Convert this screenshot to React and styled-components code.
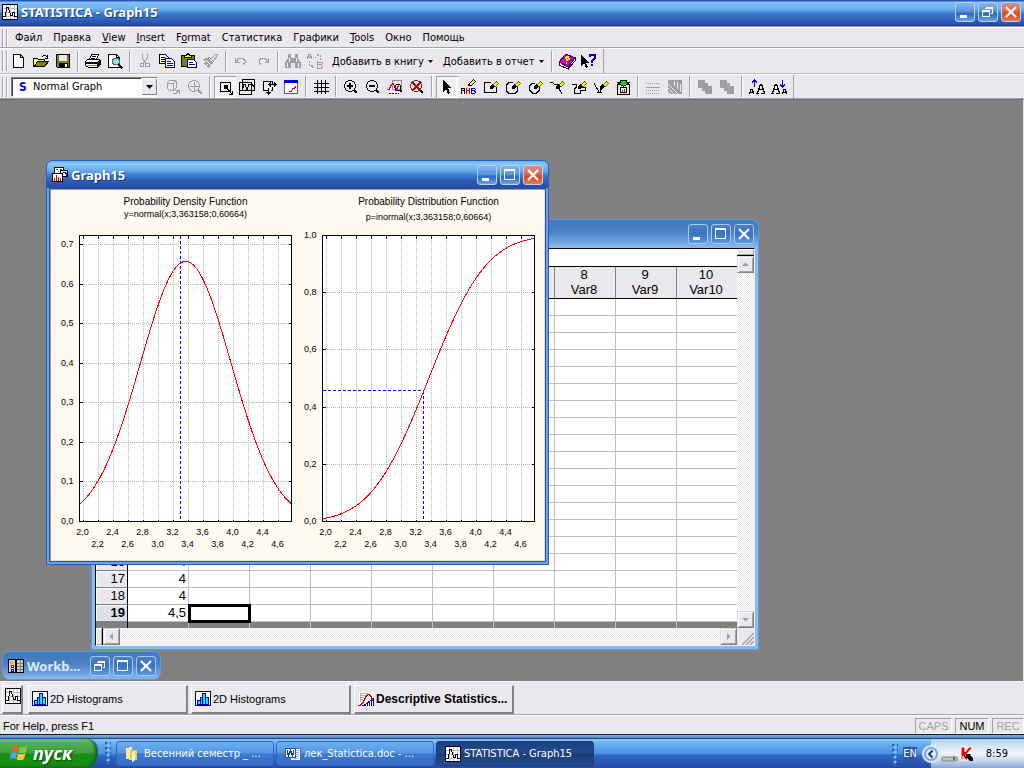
import { useState } from "react";
import styled, { createGlobalStyle, css } from "styled-components";

const GlobalStyle = createGlobalStyle`
	* {
		box-sizing: border-box;
	}
	body {
		margin: 0;
		background: #808080;
		font-family: "DejaVu Sans Condensed", "Noto Sans", sans-serif;
		font-size: 11px;
		color: #000;
	}
	button, select {
		margin: 0;
		padding: 0;
		border: 0;
		background: none;
		font: inherit;
		color: inherit;
	}
`

const face = "#ebe8ed";
const mesh = css`
	background: repeating-conic-gradient(#fff 0 25%, #e6e3e9 0 50%) 0 0 / 2px 2px;
`

const Screen = styled.div`
	display: flex;
	flex-direction: column;
	min-height: 100vh;
`

const AppTitle = styled.header`
	display: flex;
	align-items: center;
	height: 27px;
	padding: 0 3px 2px 2px;
	border-bottom: 1px solid #9a98a0;
	background: linear-gradient(#2a56b8 0, #2a56b8 1px, #84c2f2 2px, #6cb0ee 9px, #4c8fde 12px, #3a78cc 14px, #2f62b8 20px, #2a4ea8 24px, #203f90 26px);
`

const TitleText = styled.h1`
	flex: 1;
	margin: 0 0 0 3px;
	font-family: "Noto Sans", sans-serif;
	font-size: 13px;
	font-weight: bold;
	line-height: 18px;
	color: #fff;
	text-shadow: 1px 1px 0 #1c3a80;
	white-space: nowrap;
`

const TitleButtons = styled.div`
	display: flex;
	gap: 3px;
`

const TitleButton = styled.button`
	display: flex;
	width: 20px;
	height: 20px;
	border: 1px solid ${(p) => p.$idle ? "#a4ccf4" : "#b4d4f6"};
	border-radius: 3px;
	background: ${(p) => p.$close
		? "linear-gradient(#dc9088, #d86850 45%, #e04818 60%, #e87858)"
		: p.$idle
			? "linear-gradient(#4a80c8, #3a72c4 50%, #5c98dc)"
			: "linear-gradient(#88b4ec, #5c94dc 45%, #2c68c0 60%, #6ca4e4)"};
	svg {
		width: 18px;
		height: 18px;
	}
`

const MenuBar = styled.nav`
	display: flex;
	align-items: center;
	height: 21px;
	padding-left: 2px;
	background: ${face};
	border-top: 1px solid #fff;
	border-bottom: 1px solid #a4a1a8;
`

const MenuItem = styled.button`
	padding: 0 5px 0 6px;
	line-height: 16px;
	white-space: nowrap;
`

const Grip = styled.span`
	width: 5px;
	height: ${(p) => p.$height || 20}px;
	margin-right: ${(p) => (p.$height ? 2 : 1)}px;
	border: 1px solid #a4a1a8;
	border-width: 0 1px;
	box-shadow: inset 1px 0 #fff, 1px 0 #fff;
`

const ToolRow = styled.div`
	display: flex;
	height: ${(p) => p.$height}px;
	background: ${face};
	border-top: 1px solid #fff;
	border-bottom: 1px solid ${(p) => (p.$last ? "#a4a1a8" : "#bdbac0")};
`

const Toolbar = styled.div`
	display: flex;
	align-items: center;
	padding: 0 3px 0 2px;
	border-right: 1px solid #a4a1a8;
`

const ToolButton = styled.button`
	display: flex;
	align-items: center;
	justify-content: center;
	width: 22px;
	height: 22px;
	${(p) => p.$on && css`
		${mesh}
		box-shadow: inset 1px 1px #a4a1a8, inset -1px -1px #fff;
	`}
	svg {
		width: 16px;
		height: 16px;
		overflow: visible;
	}
`

const TextButton = styled.button`
	display: flex;
	align-items: center;
	justify-content: space-between;
	min-width: 111px;
	height: 22px;
	padding: 0 4px 0 6px;
	white-space: nowrap;
	svg {
		width: 5px;
		height: 3px;
	}
`

const Divider = styled.span`
	width: 8px;
	height: 21px;
	background: linear-gradient(90deg, transparent 3px, #a4a1a8 3px, #a4a1a8 4px, #fff 4px, #fff 5px, transparent 5px);
`

const Combo = styled.label`
	display: flex;
	align-items: center;
	width: 147px;
	height: 20px;
	margin: 0 4px 0 3px;
	padding-left: 7px;
	border: 1px solid #808080;
	border-right-color: #fff;
	border-bottom-color: #fff;
	box-shadow: inset 1px 1px #404040;
	background: #fff;
	b {
		width: 14px;
		font: bold 12px "DejaVu Sans Condensed", sans-serif;
		color: #0000e8;
	}
	select {
		flex: 1;
		appearance: none;
		outline: none;
	}
`

const ComboArrow = styled.span`
	display: flex;
	align-items: center;
	justify-content: center;
	width: 16px;
	height: 17px;
	background: ${face};
	box-shadow: inset 1px 1px #fff, inset -1px -1px #808080;
	svg {
		width: 7px;
		height: 4px;
	}
`

const Workspace = styled.main`
	position: relative;
	flex: 1;
	min-height: 583px;
	overflow: hidden;
	background: #808080;
	border-top: 1px solid #707078;
	border-right: 1px solid #e4e2e8;
	border-bottom: 1px solid #f4f2f6;
`

const Window = styled.section`
	position: absolute;
	left: ${(p) => p.$x}px;
	top: ${(p) => p.$y}px;
	width: ${(p) => p.$w}px;
	height: ${(p) => p.$h}px;
	display: flex;
	flex-direction: column;
	overflow: hidden;
	border: 1px solid ${(p) => (p.$active ? "#2c5cc0" : "#5c9ae6")};
	border-radius: ${(p) => (p.$docked ? "7px" : "7px 7px 0 0")};
	background: ${(p) => (p.$active ? "#68a2e8" : "#84bcf2")};
`

const WindowTitle = styled.header`
	display: flex;
	flex: none;
	align-items: center;
	height: 27px;
	padding: 1px ${(p) => (p.$active ? 5 : 4)}px 0 5px;
	background: ${(p) => (p.$active
		? "linear-gradient(#6cb0ea, #8ac8f4 3px, #66a8ea 10px, #3c7ed0 14px, #2c5cb4 20px, #264ca4)"
		: "linear-gradient(#4478bc, #4c80c4 12px, #6c9cd8 20px, #88b8ec)")};
	${TitleText} {
		color: ${(p) => (p.$active ? "#fff" : "#dcecff")};
		text-shadow: ${(p) => (p.$active ? "1px 1px 0 #1c3a80" : "none")};
	}
`

const GraphBody = styled.div`
	flex: 1;
	margin: 0 2px 2px;
	border: 1px solid #2a4fa6;
	background: #fffaf0;
	box-shadow: inset 1px 1px #a09ca4, inset -1px -1px #e0dcdc;
	svg {
		display: block;
		width: 100%;
		height: 100%;
	}
`

const SheetBody = styled.div`
	flex: 1;
	display: grid;
	grid-template-columns: 1fr 17px;
	grid-template-rows: 1fr 17px;
	margin: 1px 3px 3px;
	border: 1px solid #000;
	border-right-color: #f4f2f6;
	border-bottom-color: #f4f2f6;
	background: ${face};
	overflow: hidden;
`

const SheetPane = styled.div`
	min-width: 0;
	overflow: hidden;
	background: #808080;
`

const SheetHeading = styled.div`
	height: 18px;
	border-bottom: 1px solid #000;
	background: #fff;
`

const Sheet = styled.table`
	width: 100%;
	table-layout: fixed;
	border-spacing: 0;
	font: 13px "Liberation Sans", Arial, sans-serif;
	th, td {
		padding: 0;
		border-right: 1px solid #c0c0c0;
		border-bottom: 1px solid #c0c0c0;
		overflow: hidden;
	}
	thead th {
		width: 61px;
		height: 32px;
		padding: 0 2px 1px 0;
		background: ${face};
		border-right-color: #808080;
		border-bottom-color: #000;
		font-weight: normal;
		line-height: 15px;
	}
	thead th:first-child {
		width: 32px;
	}
	thead th:last-child {
		width: auto;
	}
	tbody th {
		height: 17px;
		padding-right: 2px;
		background: ${face};
		border-right-color: #000;
		border-bottom-color: #808080;
		box-shadow: inset 1px 1px #fff;
		font-weight: normal;
		line-height: 16px;
		text-align: right;
	}
	tbody td {
		height: 17px;
		padding-right: 2px;
		background: #fff;
		line-height: 16px;
		text-align: right;
	}
	tbody tr:last-child th {
		font-weight: bold;
		background: #dce0e6;
	}
	th:last-child, td:last-child {
		border-right: 0;
	}
	tfoot td {
		height: 6px;
		border-bottom: 0;
	}
	tfoot td:first-child {
		border-right-color: #000;
	}
	td.cursor {
		outline: 3px solid #000;
		outline-offset: -2px;
	}
`

const ScrollBar = styled.div`
	display: flex;
	flex-direction: ${(p) => (p.$vertical ? "column" : "row")};
	${mesh}
`

const ScrollButton = styled.button`
	display: flex;
	align-items: center;
	justify-content: center;
	width: 17px;
	height: 17px;
	background: ${face};
	border: 1px solid #808080;
	border-top-color: #dcd9e0;
	border-left-color: #dcd9e0;
	box-shadow: inset 1px 1px #fff, inset -1px -1px #a4a1a8;
	svg {
		width: 7px;
		height: 7px;
	}
`

const Splitter = styled.span`
	background: ${face};
	box-shadow: inset 1px 1px #fff, inset -1px -1px #a4a1a8;
	${(p) => p.$vertical
		? "height: 7px; border-bottom: 1px solid #000;"
		: "width: 7px; border-right: 1px solid #000;"}
`

const Track = styled.span`
	flex: 1;
`

const WindowBar = styled.div`
	display: flex;
	gap: 3px;
	height: 33px;
	padding: 3px 2px 1px;
	background: ${face};
	border-bottom: 1px solid #a4a1a8;
`

const WindowTab = styled.button`
	display: flex;
	align-items: center;
	gap: 2px;
	flex: 0 1 ${(p) => (p.$square ? 21 : 160)}px;
	min-width: 21px;
	height: 29px;
	padding-left: ${(p) => (p.$square ? 2 : 3)}px;
	padding-bottom: ${(p) => (p.$square ? 6 : 0)}px;
	margin-right: ${(p) => (p.$square ? 2 : 0)}px;
	border: 1px solid #fff;
	border-right: 2px solid #848188;
	border-bottom: 2px solid #848188;
	font-family: "Liberation Sans", Arial, sans-serif;
	font-weight: ${(p) => (p.$active ? "bold" : "normal")};
	font-size: ${(p) => (p.$active ? 12 : 11)}px;
	line-height: 16px;
	white-space: nowrap;
	svg {
		flex: none;
		width: 16px;
		height: 16px;
	}
`

const StatusBar = styled.footer`
	display: flex;
	align-items: center;
	gap: 3px;
	height: 19px;
	padding: 2px 0 0 3px;
	background: ${face};
	border-top: 1px solid #fff;
	font-family: "Liberation Sans", Arial, sans-serif;
	font-size: 11px;
	p {
		flex: 1;
		margin: 0;
	}
`

const StatusCell = styled.span`
	width: ${(p) => p.$w}px;
	height: 16px;
	line-height: 15px;
	text-align: center;
	border: 1px solid #a4a1a8;
	border-right-color: #fff;
	border-bottom-color: #fff;
	color: ${(p) => (p.$on ? "#000" : "#a4a1a8")};
`

const TaskBar = styled.div`
	display: flex;
	height: 34px;
	padding-top: 5px;
	background: linear-gradient(#0c2030 1px, #84acd4 1px, #5c88bc 4px, #1c48a4 4px, #1c48a4 5px, #88c4f2 5px, #5ea8ee 12px, #4a90e0 20px, #2f6cc8 21px, #2c58b4 28px, #2648a4 34px);
	color: #fff;
`

const StartButton = styled.button`
	display: flex;
	align-items: center;
	gap: 4px;
	width: 97px;
	height: 29px;
	padding: 0 0 2px 10px;
	border-radius: 0 10px 12px 0;
	background: linear-gradient(#7cc878, #50b050 4px, #3ca03c 14px, #1c8c1c 15px, #10940c 24px, #2c7c2c);
	box-shadow: inset -2px -1px 3px #186018, 1px 0 #2a58a8;
	font: italic bold 18px "Open Sans", "Noto Sans", sans-serif;
	line-height: 26px;
	text-shadow: 1px 1px 2px #104010;
	svg {
		width: 19px;
		height: 18px;
	}
`

const Dots = styled.span`
	width: 6px;
	height: 22px;
	margin: 3px 5px 0 8px;
	background: radial-gradient(circle at 1px 1px, #2a5cc0 1px, transparent 2px) 0 0 / 5px 5px, radial-gradient(circle at 3px 3px, #8cc4f8 1px, transparent 2px) 0 0 / 5px 5px;
`

const TaskButton = styled.button`
	display: flex;
	align-items: center;
	gap: 3px;
	flex: 0 1 158px;
	height: 25px;
	margin: 2px 2px 0 0;
	padding-left: 8px;
	border-radius: 3px;
	border: 1px solid ${(p) => (p.$active ? "#183c7c" : "#3468bc")};
	background: ${(p) => (p.$active
		? "linear-gradient(#1c4080, #204c94 10px, #1c3c78 12px, #284c90)"
		: "linear-gradient(#6cb0f0, #5496e4 11px, #3c78d0 12px, #386cc4)")};
	font-size: 11px;
	white-space: nowrap;
	svg {
		flex: none;
		width: 16px;
		height: 16px;
	}
`

const Tray = styled.div`
	display: flex;
	align-items: center;
	margin-left: auto;
	height: 29px;
	svg {
		flex: none;
	}
`

const Lang = styled.button`
	width: 14px;
	height: 14px;
	margin-right: 14px;
	line-height: 14px;
	background: #2c58a8;
	font-size: 11px;
`

const TrayLight = styled.div`
	display: flex;
	align-items: center;
	height: 29px;
	width: 93px;
	padding-right: 16px;
	background: linear-gradient(#a8d0f4, #d8e8f8 8px, #f0f6fc 15px, #c4d4ec 22px, #88a4d4);
	color: #000;
	time {
		margin-left: auto;
	}
	svg:first-child {
		margin-left: -10px;
	}
`

// ---- icons ----

const gray = "#a09da4";

const glyphs = {
	create: <path d="M2.5 1.5h7l3 3v10h-10zM9.5 1.5v3h3" fill="#fff" stroke="#000" />,
	open: <>
		<path d="M.5 13.5v-8h4l1 1h6v3h-7z" fill="#ffff60" stroke="#000" />
		<path d="M1.5 13.5l3-5h11l-4 5z" fill="#808000" stroke="#000" />
		<path d="M9 3.5h1M10 2.5h3M13 3.5h1M14.5 2v4M12 5.5h3" fill="none" stroke="#000" />
	</>,
	save: <>
		<path d="M1.5 1.5h13v13h-12l-1-1z" fill="#808000" stroke="#000" />
		<path d="M4 2h8v6H4z" fill={face} />
		<path d="M4 10h9v4H4z" />
		<path d="M10 11h2v3h-2z" fill="#fff" />
	</>,
	print: <>
		<path d="M4.5 6.5l2-5h7l-2 5M7 3.5h4M6 5.5h4" fill="#fff" stroke="#000" />
		<path d="M.5 8.5l2-2h12l1 1v4l-3 3h-9l-3-2z" fill="#fff" stroke="#000" />
		<path d="M1 9h12v2H1zM12 9l3-2v4l-3 3z" />
		<path d="M2 12.5h10" stroke="#808080" />
		<path d="M8 11.5h2" stroke="#ffff00" />
	</>,
	preview: <>
		<path d="M1.5 1.5h8l3 3v10h-11zM9.5 1.5v3h3" fill="#fff" stroke="#000" />
		<circle cx="9" cy="8.5" r="3.5" fill="#80e8f0" stroke="#606060" />
		<path d="M11.5 11.5l4 4" stroke="#000" strokeWidth="2" />
	</>,
	cut: <g fill="none" stroke={gray}>
		<path d="M5.5 1v4l3 5M10.5 1v4l-4 5" />
		<circle cx="5" cy="12" r="2" />
		<circle cx="10.5" cy="12" r="2" />
	</g>,
	copy: <>
		<path d="M.5 1.5h6l3 3v6h-9z" fill="#fff" stroke="#000" />
		<path d="M2 4.5h4M2 6.5h5M2 8.5h4" stroke="#000" />
		<path d="M6.500 5.500h6l3 3v6h-9z" fill="#fff" stroke="#000090" />
		<path d="M8 8.500h4M8 10.500h6M8 12.500h6" stroke="#000090" />
	</>,
	paste: <>
		<path d="M.5 2.500h13v11h-13z" fill="#808000" stroke="#000" />
		<path d="M3.500 4.500v-2h2l1-2h1l1 2h2v2z" fill="#ffff40" stroke="#000" />
		<path d="M6.500 6.500h6l3 3v5h-9z" fill="#fff" stroke="#000090" />
		<path d="M8 9.500h4M8 11.500h6" stroke="#000090" />
	</>,
	brush: <>
		<path d="M0 6l6-2 5 5-6 6-2-2 2-2-3 1-1-2 2-2-2 0z" fill={gray} />
		<path d="M8 6l5-5 2 1-5 6z" fill={face} stroke={gray} />
		<path d="M3 7l6 6M6 5l5 5" stroke="#fff" />
	</>,
	undo: <path d="M2.500 5v4h4M3 8.500l3-3h4l2 2v2l-2 2" fill="none" stroke={gray} />,
	redo: <path d="M13.500 5v4h-4M13 8.500l-3-3h-4l-2 2v2l2 2" fill="none" stroke={gray} />,
	find: <>
		<path d="M3 1h3v4h4V1h3v4l3 5v5h-6v-5H6v5H0v-5l3-5z" fill={gray} />
		<path d="M4.500 5v4M11.500 5v4M2.500 10v4M13.500 10v4" stroke="#fff" />
	</>,
	replace: <>
		<path d="M0 6l2-5h1l2 5M1 4.500h3M10.500 8v7h4l1-1-1-2 1-2-1-1h-4M11 11.500h3" fill="none" stroke={gray} />
		<path d="M8 5l5-4M10 1.500h3v3M13.500 5v2M2.500 8v4l4 2M5 12l2 2-2 1" fill="none" stroke={gray} strokeDasharray="2 1" />
	</>,
	book: <>
		<path d="M0 9l7-8 9 4-7 9z" fill="#c000b0" stroke="#400040" />
		<path d="M0 9v3l9 4v-2zM9 14l7-9v3l-7 8z" fill="#fff" stroke="#400040" />
		<path d="M6 5l3-1 1 2-2 1v1M7 10h1" stroke="#ffff00" strokeWidth="2" fill="none" />
	</>,
	whatsThis: <>
		<path d="M0 2v11l3-3 2 5 2-1-2-4h3z" />
		<path d="M9 4V2h5v3l-3 3v2M11 11v2" fill="none" stroke="#0000c0" strokeWidth="2" />
	</>,
	rotate: <>
		<path d="M2.500 3.500l2-2h6l1 1v6l-2 3h-5l-2-2zM3 4.500h5v6M8 4.500l3-2" fill="none" stroke={gray} />
		<path d="M8 14.500h3l3-3M11 11.500h3v3" fill="none" stroke={gray} />
	</>,
	aim: <>
		<circle cx="7" cy="7" r="5.500" fill="none" stroke={gray} />
		<path d="M7.500 3v9M3 7.500h9" stroke={gray} />
		<path d="M11 11l4 4" stroke={gray} strokeWidth="2" />
	</>,
	track: <>
		<path d="M3.500 3.500h10v9h-10z" fill="none" stroke="#000" />
		<path d="M7 6h4v4H7z" />
		<path d="M9 8l6 7M15.500 12v3.500H12" fill="none" stroke="#000" />
	</>,
	brushing: <>
		<path d="M3.500.500h12v11h-12zM.500 3.500h12v12H.500z" fill="none" stroke="#000" />
		<path d="M1 11.500h2l2-6h1l2 5 2-5h3l2 2" fill="none" stroke="#000" />
	</>,
	resize: <>
		<path d="M8 2.500H2.500v9h4M11.500 8v3.500h-2M8 2.500h3.500v2" fill="none" stroke="#000" />
		<path d="M8 5.500h7M10 3.500l-2 2 2 2M13 3.500l2 2-2 2M7.500 9v6M5.500 13l2 2 2-2" fill="none" stroke="#000" />
	</>,
	editor: <>
		<path d="M1.500 1.500h13v13h-13z" fill="#fff" stroke="#606060" />
		<path d="M1 1h14v3H1z" fill="#0000f0" />
		<path d="M6 12.500h2l2-3h1l2-2" fill="none" stroke="#f00000" />
	</>,
	grid: <path d="M4.500 1v14M8.500 1v14M12.500 1v14M1 4.500h15M1 8.500h15M1 12.500h15" stroke="#000" />,
	zoomIn: <>
		<circle cx="7" cy="7" r="5.500" fill="none" stroke="#000" />
		<path d="M4 7h6M7 4v6M11 11l3 3" stroke="#000" strokeWidth="2" />
	</>,
	zoomOut: <>
		<circle cx="7" cy="7" r="5.500" fill="none" stroke="#000" />
		<path d="M4 7h6M11 11l3 3" stroke="#000" strokeWidth="2" />
	</>,
	zoomArea: <>
		<path d="M5.500 1.500h9v9h-9z" fill="none" stroke="#909090" />
		<path d="M0 10.500h2l2-4 2-2 2 3 1 4 3-6" fill="none" stroke="#e00000" />
		<circle cx="11" cy="8.500" r="3" fill="none" stroke="#000" />
		<path d="M13 11l2 2" stroke="#000" strokeWidth="2" />
		<path d="M2 14.500h10" stroke="#0000e0" strokeDasharray="2 1" />
	</>,
	zoomOff: <>
		<circle cx="7" cy="7" r="5.500" fill="none" stroke="#404040" />
		<path d="M11 11l3 3" stroke="#000" strokeWidth="2" />
		<path d="M3 3l9 9M12 3l-9 9" stroke="#c00000" strokeWidth="2" />
	</>,
	pointer: <path d="M4 1v12l3-3 2 5 2-1-2-5h4z" />,
	label: <>
		<path d="M.500 15V9.500h3V15M.500 11.500h3" stroke="#000" fill="none" />
		<path d="M5.500 9v6M8.500 9v6M5 11.500h4" stroke="#e00000" fill="none" />
		<path d="M10.500 9.500h3l1 1-1 1 1 2-1 1h-3zM11 11.500h3" stroke="#0000e0" fill="none" />
		<path d="M7.500 6.500l1-2 4-4 2 2-4 4z" fill="#ffff00" stroke="#000" />
	</>,
	hatch: <>
		<path d="M1 4.500h14M1 11.500h14M1 14.500h14" stroke={gray} strokeDasharray="1 1" />
		<path d="M1 8h14" stroke={gray} strokeWidth="1" />
	</>,
	fill: <>
		<path d="M1 1h14v14H1z" fill={gray} />
		<path d="M1 5l10 10M1 9l6 6M1 13l2 2M7.500 2v5M10.500 3v7M13.500 5v8" stroke={face} />
	</>,
	front: <path d="M1 1h7v3h3v3h4v8H8v-3H5V9H1z" fill={gray} />,
	grow: <>
		<path d="M7 14.500h3M12 14.500h4M8.500 14l3-9h1l3 9M10 10.500h4" fill="none" stroke="#000" />
		<path d="M.500 15l1.500-5h1l2 5M1 13.500h4" fill="none" stroke="#000" />
		<path d="M5.500 8V1M3 3.500L5.500 1 8 3.500" fill="none" stroke="#0000f0" />
	</>,
	shrink: <>
		<path d="M0 14.500h3M5 14.500h4M1.500 14l3-9h1l3 9M3 10.500h4" fill="none" stroke="#000" />
		<path d="M11.500 15l1.500-5h1l2 5M12 13.500h4" fill="none" stroke="#000" />
		<path d="M11.500 1v7M9 5.500L11.500 8 14 5.500" fill="none" stroke="#0000f0" />
	</>,
	embed: <>
		<path d="M2.500 5.500h12v10h-12z" fill={face} stroke="#000" />
		<path d="M5.500 8.500h6v5h-6z" fill="#fff" stroke="#000" />
		<path d="M7.500 11v2M9.500 10v3" stroke="#e00000" />
		<path d="M5.500 1.500h6v2h3l-6 4-6-4h3z" fill="#00e000" stroke="#000" />
	</>,
	stat: <>
		<path d="M.5.500h15v15H.500z" fill="#fff" stroke="#000" />
		<path d="M4.500 1v14M8.500 1v14M12.500 1v14M1 4.500h14M1 8.500h14M1 12.500h14" stroke="#c0c0c0" />
		<path d="M1 12.500h2l2-9h1l3 8h1l1-3h1l1 4h2" fill="none" stroke="#000" />
	</>,
	graphDoc: <>
		<path d="M2.500.500h9v7h-9z" fill="#fff" stroke="#000" />
		<path d="M4 2.500h2M6 4.500h1M8 2.500h2" stroke="#00a000" />
		<path d="M8.500 3.500h7v6h-7z" fill="#fff" stroke="#000" />
		<path d="M11 5.500h2v1h1v2" fill="none" stroke="#0000e0" />
		<path d="M.5 6.500h10v8H.500z" fill="#fff" stroke="#000" />
		<path d="M2.500 11v3M4.500 8v6M6.500 10v4M8.500 11v3" stroke="#e00000" />
	</>,
	workbook: <>
		<path d="M0 1h16v14H0z" />
		<path d="M1 2h6v12H1zM9 2h6v12H9z" fill="#d0d0d0" />
		<path d="M2.500 3.500h2v2h-2z" fill="#fff" stroke="#c0b000" />
		<path d="M3.500 7.500h2v2h-2z" fill="#fff" stroke="#e00000" />
		<path d="M3.500 11.500h2v2h-2z" fill="#fff" stroke="#0000e0" />
		<path d="M12.500 2v12M9 5.500h6M9 8.500h6M9 11.500h6" stroke="#808080" />
	</>,
	histogram: <>
		<path d="M.5.500h15v14H.500z" fill="#fff" stroke="#000080" />
		<path d="M2.500 13.500v-4h3v-3h2v-4h3v4h3v7z" fill="#00e8f8" stroke="#0000b0" />
		<path d="M5.500 9v5M7.500 6v8M10.500 6v8" stroke="#0000b0" />
	</>,
	descriptive: <>
		<path d="M1 1h14v14H1z" fill="#fff" />
		<path d="M2 2.500h8M2 4.500h6M2 6.500h4M2 8.500h3M2.500 2v9" stroke="#b0b0b0" />
		<path d="M3 15l4-2 4-3 5-3v8z" fill="#0000d0" />
		<path d="M8.500 13v2M10.500 12v3M12.500 10v5M14.500 10v5" stroke="#fff" />
		<path d="M0 14.500h2l3-3 3-6 2-2h1l2 2 2 4" fill="none" stroke="#e00000" />
	</>,
	folder: <>
		<path d="M1 2l6-1v13l-6-1z" fill="#f8e8a0" />
		<path d="M5 4h7v10l-5 1-2-2z" fill="#e8c860" />
		<path d="M7 6l3-1v9l-3 2z" fill="#fff4b8" />
	</>,
	word: <>
		<path d="M5 2h10v12H5z" fill="#fff" stroke="#4870c0" />
		<path d="M9 4.500h5M9 6.500h5M9 8.500h5M9 10.500h5M9 12.500h4" stroke="#90a8d8" />
		<path d="M.5 2.500h10v9H.500z" fill="#fff" stroke="#2850b0" />
		<path d="M2 4.500l1.500 5L5.500 5l2 4.500L9 4.500" fill="none" stroke="#1838a0" strokeWidth="1.500" />
	</>,
};

const shapes = {
	rect: "M8 3.500H1.500v10h12V8",
	round: "M8 3.500H4L1.500 6v6l2 2h7l2-2V8",
	ellipse: "M8 4.500H5L2.500 7v4l3 3h4l3-3V8",
	arc: "M1 3.500h2l3 2h2l2 3 1 3 2 3",
	poly: "M1 5.500h4v3l-2 2v4h6v-3h5v-3h-4",
	arrow: "M1 4l5 9h1l2-5M3.500 13.500h5M7.500 10v4",
};

// A drawing tool: its outline with a pencil on the upper right
const Pencil = ({ shape }) => (
	<>
		<path d={shapes[shape]} fill="none" stroke="#000" />
		<path d="M9.500 5.500l4-4 2 2-4 4z" fill="#ffff00" stroke="#000" strokeWidth=".600" />
		<path d="M7 10v-2l2-3 3 3-3 2z" />
	</>
);

const Icon = ({ name }) => (
	<svg viewBox="0 0 16 16" shapeRendering="crispEdges" aria-hidden="true">
		{shapes[name] ? <Pencil shape={name} /> : glyphs[name]}
	</svg>
);

const SmallIcon = styled.span`
	display: flex;
	svg {
		width: 16px;
		height: 16px;
	}
`

const Arrow = ({ dir, color }) => {
	const d = {
		up: "M0 5h7L3.500 1.500z",
		down: "M0 2h7L3.500 5.500z",
		left: "M5 0v7L1.500 3.500z",
		right: "M2 0v7L5.500 3.500z",
	};
	return <svg viewBox="0 0 7 7" aria-hidden="true"><path d={d[dir]} fill={color || gray} /></svg>;
}

const marks = {
	minimize: <path d="M4 12h7v3H4z" fill="#fff" />,
	maximize: <path d="M3.500 3.500h10v10h-10zM4 4.500h10" fill="none" stroke="#fff" shapeRendering="crispEdges" />,
	restore: <path d="M6.500 4.500h7v6h-2M6 5.500h8M3.500 7.500h7v6h-7zM3 8.500h8" fill="none" stroke="#fff" shapeRendering="crispEdges" />,
	close: <path d="M4 4l10 10M14 4L4 14" stroke="#fff" strokeWidth="2.200" />,
};

const Controls = ({ kinds, idle }) => (
	<TitleButtons>
		{kinds.map((kind) => (
			<TitleButton key={kind} aria-label={kind} $idle={idle} $close={kind === "close" && !idle}>
				<svg viewBox="0 0 18 18">{marks[kind]}</svg>
			</TitleButton>
		))}
	</TitleButtons>
);

const Tools = ({ names, on }) => names.map((name, i) => (
	name === "|"
		? <Divider key={i} />
		: <ToolButton key={i} aria-label={name} $on={name === on}><Icon name={name} /></ToolButton>
));

// ---- graph ----

const MEAN = 3.363158;
const SIGMA = 0.60664;
const CUT = 3.3;
const PLOT_W = 212;
const PLOT_H = 286;

const density = (x) => Math.exp(-((x - MEAN) ** 2) / (2 * SIGMA ** 2)) / (SIGMA * Math.sqrt(2 * Math.PI));

const distribution = (x) => {
	const z = Math.abs(x - MEAN) / SIGMA;
	const t = 1 / (1 + 0.2316419 * z);
	const poly = t * (0.31938153 + t * (-0.356563782 + t * (1.781477937 + t * (-1.821255978 + t * 1.330274429))));
	const tail = Math.exp(-z * z / 2) / Math.sqrt(2 * Math.PI) * poly;
	return x > MEAN ? 1 - tail : tail;
}

const toX = (v) => 4 + (v - 2) * 75;
const comma = (v) => v.toFixed(1).replace(".", ",");

const PlotText = styled.text`
	font: ${(p) => p.$size || 9}px "Liberation Sans", Arial, sans-serif;
`

const Plot = ({ x, title, formula, formulaY, fn, max, step, cutFrom, guide }) => {
	const toY = (v) => PLOT_H - (v / max) * PLOT_H;
	const cutX = Math.floor(toX(CUT));
	const xTicks = Array.from({ length: 14 }, (_, i) => 2 + i * 0.2);
	const yTicks = Array.from({ length: Math.floor(max / step + 0.01) + 1 }, (_, i) => i * step);
	const points = Array.from({ length: PLOT_W + 1 }, (_, px) => `${px},${toY(fn(2 + (px - 4) / 75))}`).join(" ");

	return (
		<g transform={`translate(${x} 45.5)`} shapeRendering="crispEdges">
			<rect width={PLOT_W} height={PLOT_H} fill="#fff" />
			{xTicks.map((v) => (
				<g key={v}>
					<path d={`M${Math.round(toX(v))} 0V${PLOT_H}`} stroke="#b4b4b4" strokeDasharray="1 1" />
					<path d={`M${Math.round(toX(v))} 0v3M${Math.round(toX(v))} ${PLOT_H}v-2`} stroke="#000" />
				</g>
			))}
			{yTicks.map((v) => (
				<g key={v}>
					<path d={`M0 ${Math.round(toY(v))}H${PLOT_W}`} stroke="#b4b4b4" strokeDasharray="1 1" />
					<path d={`M0 ${Math.round(toY(v))}h3M${PLOT_W} ${Math.round(toY(v))}h-3`} stroke="#000" />
					<PlotText x="-6" y={Math.round(toY(v)) + 2} textAnchor="end">{comma(v)}</PlotText>
				</g>
			))}
			<path
				d={`M${cutX} ${cutFrom}V${PLOT_H}${guide ? `M0 ${cutFrom}H${cutX}` : ""}`}
				fill="none"
				stroke="#0000ff"
				strokeDasharray="3 2"
			/>
			<polyline points={points} fill="none" stroke="#ff0000" />
			<rect width={PLOT_W} height={PLOT_H} fill="none" stroke="#000" />
			{xTicks.map((v, i) => (
				<PlotText key={v} x={Math.round(toX(v)) - 1} y={i % 2 ? PLOT_H + 25 : PLOT_H + 13} textAnchor="middle">
					{comma(v)}
				</PlotText>
			))}
			<PlotText $size={10} x={PLOT_W / 2} y="-31" textAnchor="middle">{title}</PlotText>
			<PlotText x={PLOT_W / 2} y={formulaY} textAnchor="middle">{formula}</PlotText>
		</g>
	);
}

const GraphWindow = () => (
	<Window $x={46} $y={60} $w={503} $h={405} $active>
		<WindowTitle $active>
			<SmallIcon><Icon name="graphDoc" /></SmallIcon>
			<TitleText as="h2">Graph15</TitleText>
			<Controls kinds={["minimize", "maximize", "close"]} />
		</WindowTitle>
		<GraphBody>
			<svg viewBox="0 0 495 372" preserveAspectRatio="xMinYMin" role="img" aria-label="Normal distribution">
				<g transform="translate(1 1)">
					<Plot
						x={28.5} title="Probability Density Function" formula="y=normal(x;3,363158;0,60664)"
						formulaY={-19} fn={density} max={0.723} step={0.1} cutFrom={0}
					/>
					<Plot
						x={271.5} title="Probability Distribution Function" formula="p=inormal(x;3,363158;0,60664)"
						formulaY={-16} fn={distribution} max={1} step={0.2} cutFrom={155} guide
					/>
				</g>
			</svg>
		</GraphBody>
	</Window>
);

// ---- spreadsheet ----

const columns = [1, 2, 3, 4, 5, 6, 7, 8, 9, 10];
const values = { 16: "4", 17: "4", 18: "4", 19: "4,5" };

const SheetWindow = () => (
	<Window $x={91} $y={119} $w={668} $h={431}>
		<WindowTitle>
			<TitleText as="h2" />
			<Controls kinds={["minimize", "maximize", "close"]} idle />
		</WindowTitle>
		<SheetBody>
			<SheetPane>
				<SheetHeading />
				<Sheet>
					<thead>
						<tr>
							<th />
							{columns.map((c) => <th key={c} scope="col">{c}<br />Var{c}</th>)}
						</tr>
					</thead>
					<tbody>
						{Array.from({ length: 19 }, (_, i) => i + 1).map((row) => (
							<tr key={row}>
								<th scope="row">{row}</th>
								{columns.map((c) => (
									<td key={c} className={row === 19 && c === 2 ? "cursor" : undefined}>
										{c === 1 && values[row]}
									</td>
								))}
							</tr>
						))}
					</tbody>
					<tfoot>
						<tr>
							<td />
							{columns.map((c) => <td key={c} />)}
						</tr>
					</tfoot>
				</Sheet>
			</SheetPane>
			<ScrollBar $vertical>
				<Splitter $vertical />
				<ScrollButton aria-label="up"><Arrow dir="up" /></ScrollButton>
				<Track />
				<ScrollButton aria-label="down"><Arrow dir="down" /></ScrollButton>
			</ScrollBar>
			<ScrollBar>
				<Splitter />
				<ScrollButton aria-label="left"><Arrow dir="left" /></ScrollButton>
				<Track />
				<ScrollButton aria-label="right"><Arrow dir="right" /></ScrollButton>
			</ScrollBar>
			<svg width="17" height="17" aria-hidden="true">
				<path d="M5 17L17 5M9 17l8-8M13 17l4-4" stroke="#a4a1a8" strokeWidth="1.5" />
			</svg>
		</SheetBody>
	</Window>
);

const menu = ["Файл", "Правка", "_View", "_Insert", "F_ormat", "Статистика", "Графики", "_Tools", "Окно", "Помощь"];

const MenuLabel = ({ text }) => {
	const at = text.indexOf("_");
	if (at < 0)
		return text;
	return <>{text.slice(0, at)}<u>{text[at + 1]}</u>{text.slice(at + 2)}</>;
}

const DropMark = () => <svg viewBox="0 0 7 4" aria-hidden="true"><path d="M0 0h7L3.500 4z" /></svg>;

const App = () => {
	const [graph, setGraph] = useState("Normal Graph");

	return (
		<Screen>
			<GlobalStyle />
			<AppTitle>
				<SmallIcon><Icon name="stat" /></SmallIcon>
				<TitleText>STATISTICA - Graph15</TitleText>
				<Controls kinds={["minimize", "restore", "close"]} />
			</AppTitle>
			<MenuBar>
				<Grip $height={18} />
				{menu.map((item) => <MenuItem key={item}><MenuLabel text={item} /></MenuItem>)}
			</MenuBar>
			<ToolRow $height={26}>
				<Toolbar>
					<Grip />
					<Tools names={["create", "open", "save", "|", "print", "preview", "|", "cut", "copy", "paste", "brush", "|", "undo", "redo", "|", "find", "replace"]} />
					<TextButton>Добавить в книгу<DropMark /></TextButton>
					<TextButton>Добавить в отчет<DropMark /></TextButton>
					<Tools names={["|", "book", "whatsThis"]} />
				</Toolbar>
			</ToolRow>
			<ToolRow $height={25} $last>
				<Toolbar>
					<Grip />
					<Combo>
						<b>S</b>
						<select aria-label="Graph style" value={graph} onChange={(e) => setGraph(e.target.value)}>
							<option>Normal Graph</option>
						</select>
						<ComboArrow><DropMark /></ComboArrow>
					</Combo>
					<Tools on="track" names={["rotate", "aim", "|", "track", "brushing", "resize", "editor", "|", "grid", "|", "zoomIn", "zoomOut", "zoomArea", "zoomOff", "|"]} />
					<Tools on="pointer" names={["pointer", "label", "rect", "round", "ellipse", "arc", "poly", "arrow", "embed", "|", "hatch", "fill", "|", "front", "front", "|", "grow", "shrink"]} />
				</Toolbar>
			</ToolRow>
			<Workspace>
				<SheetWindow />
				<GraphWindow />
				<Window $x={2} $y={551} $w={159} $h={29} $docked>
					<WindowTitle>
						<SmallIcon><Icon name="workbook" /></SmallIcon>
						<TitleText as="h2">Workb...</TitleText>
						<Controls kinds={["restore", "maximize", "close"]} idle />
					</WindowTitle>
				</Window>
			</Workspace>
			<WindowBar>
				<WindowTab $square aria-label="Analysis"><Icon name="stat" /></WindowTab>
				<WindowTab><Icon name="histogram" />2D Histograms</WindowTab>
				<WindowTab><Icon name="histogram" />2D Histograms</WindowTab>
				<WindowTab $active><Icon name="descriptive" />Descriptive Statistics...</WindowTab>
			</WindowBar>
			<StatusBar>
				<p>For Help, press F1</p>
				<StatusCell $w={37}>CAPS</StatusCell>
				<StatusCell $w={34} $on>NUM</StatusCell>
				<StatusCell $w={32}>REC</StatusCell>
			</StatusBar>
			<TaskBar>
				<StartButton>
					<svg viewBox="0 0 19 18" aria-hidden="true">
						<path d="M3 3c2-2 4-2 6-1L7.500 8C5.500 7 3.500 7 1.500 8.500z" fill="#f06030" />
						<path d="M10 2.500c2 1 5 1 7.500-.500L16 8c-2 1.500-5 1.500-7.500.500z" fill="#80c840" />
						<path d="M1 9.500c2-1.500 4-1.500 6-.500L5.500 15c-2-1-4-1-6 .500z" fill="#50a0f0" />
						<path d="M8 9.500c2 1 5 1 7.500-.500L14 15c-2 1.500-5 1.500-7.500.500z" fill="#f8c830" />
					</svg>
					пуск
				</StartButton>
				<Dots />
				<TaskButton><Icon name="folder" />Весенний семестр _ ...</TaskButton>
				<TaskButton><Icon name="word" />лек_Statictica.doc - ...</TaskButton>
				<TaskButton $active><Icon name="stat" />STATISTICA - Graph15</TaskButton>
				<Tray>
					<Dots />
					<Lang>EN</Lang>
					<TrayLight>
						<svg width="20" height="20" viewBox="0 0 20 20" aria-hidden="true">
							<circle cx="10" cy="10" r="8" fill="#7ca4dc" stroke="#dce8f8" strokeWidth="2" />
							<circle cx="10" cy="10" r="5" fill="#e4eefa" />
							<path d="M11.500 6.500L8 10l3.500 3.500" fill="none" stroke="#1c3c80" strokeWidth="2" />
						</svg>
						<svg width="17" height="18" viewBox="0 0 17 18" aria-hidden="true">
							<path d="M3 9h10l3 3H1z" fill="#e8e8e4" />
							<rect x="1" y="12" width="15" height="4" rx="1" fill="#c4c4bc" stroke="#808078" />
							<path d="M12 12h2v3h-2z" fill="#20a020" />
						</svg>
						<svg width="16" height="16" viewBox="0 0 16 16" aria-hidden="true">
							<path d="M3 1h4v5l4-5h4L8 9l2 5H7L5 10v4H3z" fill="#e80000" stroke="#fff" />
							<path d="M8 8h5l-1 1 3 3v3h-3l-3-3-1 1z" />
						</svg>
						<time>8:59</time>
					</TrayLight>
				</Tray>
			</TaskBar>
		</Screen>
	);
}

export default App;
